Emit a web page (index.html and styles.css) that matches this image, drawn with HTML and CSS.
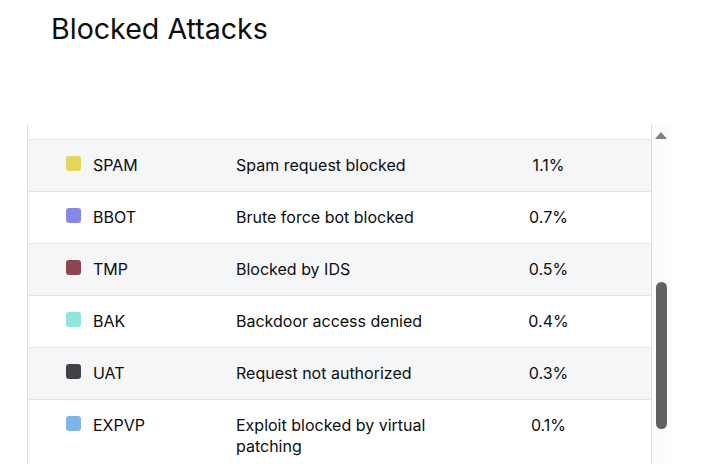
FILE: index.html
```html
<!DOCTYPE html>
<html lang="en">
<head>
<meta charset="utf-8">
<title>Blocked Attacks</title>
<link rel="stylesheet" href="styles.css">
</head>
<body>
<main class="page">
  <h1 class="title">Blocked Attacks</h1>
  <div class="panel">
    <div class="list">
      <div class="spacer"></div>
      <div class="row alt">
        <div class="code"><span class="swatch sw-spam"></span>SPAM</div>
        <div class="desc">Spam request blocked</div>
        <div class="pct">1.1%</div>
      </div>
      <div class="row">
        <div class="code"><span class="swatch sw-bbot"></span>BBOT</div>
        <div class="desc">Brute force bot blocked</div>
        <div class="pct">0.7%</div>
      </div>
      <div class="row alt">
        <div class="code"><span class="swatch sw-tmp"></span>TMP</div>
        <div class="desc">Blocked by IDS</div>
        <div class="pct">0.5%</div>
      </div>
      <div class="row">
        <div class="code"><span class="swatch sw-bak"></span>BAK</div>
        <div class="desc">Backdoor access denied</div>
        <div class="pct">0.4%</div>
      </div>
      <div class="row alt">
        <div class="code"><span class="swatch sw-uat"></span>UAT</div>
        <div class="desc">Request not authorized</div>
        <div class="pct">0.3%</div>
      </div>
      <div class="row">
        <div class="code"><span class="swatch sw-expvp"></span>EXPVP</div>
        <div class="desc">Exploit blocked by virtual patching</div>
        <div class="pct">0.1%</div>
      </div>
    </div>
    <div class="scrollbar">
      <span class="arrow"></span>
      <span class="thumb"></span>
    </div>
  </div>
</main>
</body>
</html>
```

FILE: styles.css
```css
html, body {
  margin: 0;
  padding: 0;
  background: #ffffff;
}

.page {
  font-family: Inter, "Noto Sans", sans-serif;
  color: #0d0d0d;
  height: 464px;
  overflow: hidden;
}

.title {
  margin: 0;
  padding: 12px 0 0 51px;
  font-size: 28.6px;
  line-height: 34px;
  font-weight: 400;
  color: #0d0d0d;
}

.panel {
  display: flex;
  margin: 78px 0 0 27px;
  width: 644px;
  height: 340px;
  overflow: hidden;
}

.list {
  flex: 1;
  border-left: 1px solid #dcdfe4;
  border-right: 1px solid #dcdfe4;
}

.spacer {
  height: 15px;
}

.row {
  display: grid;
  grid-template-columns: 170px 210px 205px;
  padding: 15px 0 15px 38px;
  border-top: 1px solid #e1e4e8;
  font-size: 16px;
  line-height: 21px;
  background: #ffffff;
}

.row.alt {
  background: #f5f6f8;
}

.code {
  display: flex;
  align-items: flex-start;
  gap: 12px;
}

.swatch {
  flex: none;
  width: 15px;
  height: 15px;
  margin-top: 1px;
  border-radius: 3px;
}

.sw-spam { background: #e6d558; }
.sw-bbot { background: #8688e8; }
.sw-tmp { background: #8e4552; }
.sw-bak { background: #90e6dd; }
.sw-uat { background: #424246; }
.sw-expvp { background: #7fb4ea; }

.pct {
  text-align: center;
}

.scrollbar {
  flex: none;
  width: 19px;
  background: #fcfcfc;
  display: flex;
  flex-direction: column;
  align-items: flex-start;
}

.arrow {
  margin: 8px 0 0 3px;
  width: 0;
  height: 0;
  border-left: 6.5px solid transparent;
  border-right: 6.5px solid transparent;
  border-bottom: 7px solid #808080;
}

.thumb {
  margin: 143px 0 0 4px;
  width: 11px;
  height: 147px;
  border-radius: 5.5px;
  background: #616161;
}
```
